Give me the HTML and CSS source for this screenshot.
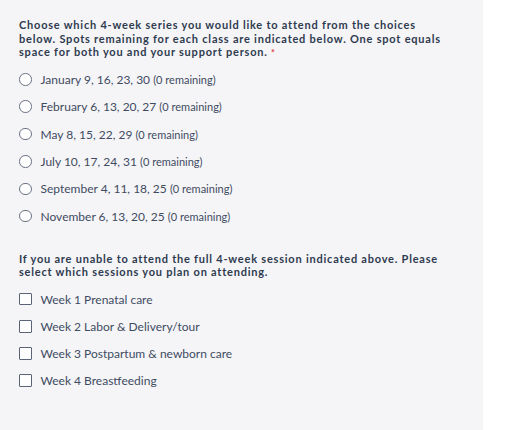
FILE: index.html
```html
<!DOCTYPE html>
<html>
<head>
<meta charset="utf-8">
<link rel="stylesheet" href="styles.css">
</head>
<body>
<div class="panel">
  <div class="group" role="radiogroup">
    <div class="question">Choose which 4-week series you would like to attend from the choices below. Spots remaining for each class are indicated below. One spot equals space for both you and your support person. <span class="req">*</span></div>
    <ul class="options radios">
      <li class="option"><span class="radio"></span><span class="label">January 9, 16, 23, 30 <span class="rem">(0 remaining)</span></span></li>
      <li class="option"><span class="radio"></span><span class="label">February 6, 13, 20, 27 <span class="rem">(0 remaining)</span></span></li>
      <li class="option"><span class="radio"></span><span class="label">May 8, 15, 22, 29 <span class="rem">(0 remaining)</span></span></li>
      <li class="option"><span class="radio"></span><span class="label">July 10, 17, 24, 31 <span class="rem">(0 remaining)</span></span></li>
      <li class="option"><span class="radio"></span><span class="label">September 4, 11, 18, 25 <span class="rem">(0 remaining)</span></span></li>
      <li class="option"><span class="radio"></span><span class="label">November 6, 13, 20, 25 <span class="rem">(0 remaining)</span></span></li>
    </ul>
  </div>
  <div class="group second">
    <div class="question">If you are unable to attend the full 4-week session indicated above. Please select which sessions you plan on attending.</div>
    <ul class="options checks">
      <li class="option"><span class="check"></span><span class="label">Week 1 Prenatal care</span></li>
      <li class="option"><span class="check"></span><span class="label">Week 2 Labor &amp; Delivery/tour</span></li>
      <li class="option"><span class="check"></span><span class="label">Week 3 Postpartum &amp; newborn care</span></li>
      <li class="option"><span class="check"></span><span class="label">Week 4 Breastfeeding</span></li>
    </ul>
  </div>
</div>
</body>
</html>
```
FILE: styles.css
```css
html, body {
  margin: 0;
  padding: 0;
  background: #ffffff;
}
body {
  font-family: Lato, "Liberation Sans", sans-serif;
}
.panel {
  width: 483px;
  height: 430px;
  box-sizing: border-box;
  background: #f5f5f8;
  padding: 18px 19px 0 19px;
}
.group.second {
  margin-top: 28.5px;
}
.question {
  font-size: 11px;
  font-weight: 700;
  letter-spacing: 0.78px;
  line-height: 13.5px;
  color: #2f3b4f;
  width: 428px;
}
.req {
  color: #e0323c;
  font-size: 9px;
  line-height: 1;
  letter-spacing: 0;
}
.options {
  list-style: none;
  margin: 13.9px 0 0 0;
  padding: 0;
  display: flex;
  flex-direction: column;
  gap: 13.35px;
}
.options.checks {
  margin-top: 13.5px;
  gap: 13.2px;
}
.option {
  display: flex;
  align-items: center;
  gap: 9px;
  height: 14px;
  font-size: 12px;
  color: #3f4b61;
}
.label {
  white-space: nowrap;
}
.rem {
  font-size: 11px;
}
.radio {
  width: 12.5px;
  height: 12.5px;
  box-sizing: border-box;
  border: 1.5px solid #6b7384;
  border-radius: 50%;
  background: #ffffff;
  flex: none;
}
.check {
  width: 12.5px;
  height: 12.5px;
  box-sizing: border-box;
  border: 1.5px solid #5b6477;
  border-radius: 1px;
  background: #ffffff;
  flex: none;
}
```
